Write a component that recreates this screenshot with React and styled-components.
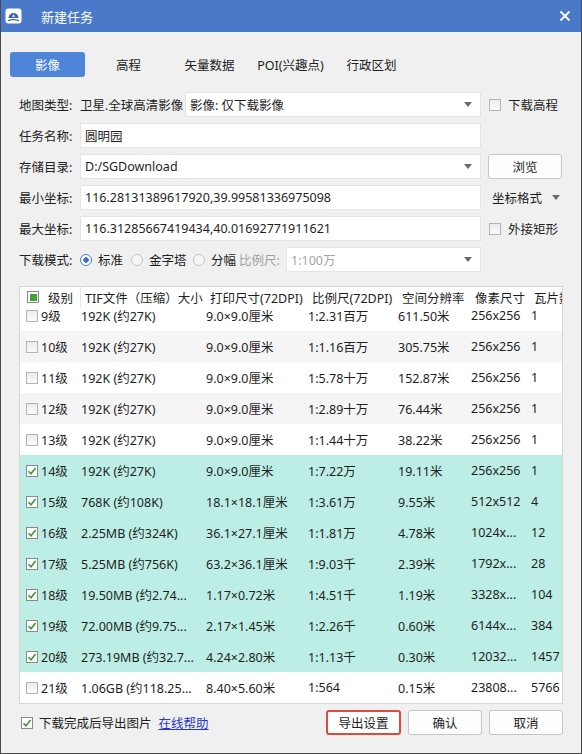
import React from 'react';
import styled, { createGlobalStyle } from 'styled-components';

const GlobalStyle = createGlobalStyle`
    html, body {
        margin: 0;
        padding: 0;
        background: #f0f0f0;
    }
    body {
        font-family: "Noto Sans", "Noto Sans CJK SC", sans-serif;
        font-size: 12.5px;
        color: #1e1e1e;
    }
    * { box-sizing: border-box; }
`

const Window = styled.div`
    width: 582px;
    height: 754px;
    display: flex;
    flex-direction: column;
    background: #f0f0f0;
    border: 1px solid #4a4a4a;
    border-top: none;
`
const TitleBar = styled.div`
    height: 32px;
    flex: none;
    display: flex;
    align-items: center;
    padding: 0 10px 0 4px;
    background: #4a79c9;
    color: #ffffff;
    font-size: 13px;
`
const Title = styled.span`
    margin-left: 19px;
    flex: 1;
`
const Body = styled.div`
    flex: 1;
    display: flex;
    flex-direction: column;
    padding: 20px 18px 0 18px;
`
const Tabs = styled.div`
    display: flex;
    gap: 6px;
    margin-left: -9px;
`
const Tab = styled.div`
    width: 75px;
    height: 25px;
    display: flex;
    align-items: center;
    justify-content: center;
    border-radius: 3px;
    background: ${p => p.$active ? '#4e85d8' : 'transparent'};
    color: ${p => p.$active ? '#ffffff' : '#222'};
`
const Form = styled.div`
    display: flex;
    flex-direction: column;
    gap: 6px;
    margin-top: 15px;
`
const Row = styled.div`
    display: grid;
    grid-template-columns: 54px 401px 1fr;
    column-gap: 7px;
    align-items: center;
    height: 25px;
`
const Label = styled.span`
    color: #222;
    white-space: nowrap;
`
const Field = styled.div`
    height: 25px;
    display: flex;
    align-items: center;
    padding: 0 8px 0 4px;
    background: #ffffff;
    border: 1px solid #e4e4e4;
    color: ${p => p.$disabled ? '#a5a5a5' : '#1e1e1e'};
    flex: 1;
    white-space: nowrap;
`
const FieldText = styled.span`
    flex: 1;
`
const Arrow = styled.span`
    width: 0;
    height: 0;
    border-left: 4px solid transparent;
    border-right: 4px solid transparent;
    border-top: 5px solid #6b6b6b;
    margin-right: ${p => p.$right || 0}px;
`
const Inline = styled.div`
    display: flex;
    align-items: center;
    height: 25px;
`
const Plain = styled.span`
    width: ${p => p.$w}px;
    flex: none;
    white-space: nowrap;
    color: ${p => p.$muted ? '#a0a0a0' : '#1e1e1e'};
`
const CheckLine = styled.label`
    display: flex;
    align-items: center;
    gap: 7px;
    white-space: nowrap;
    padding-left: 1px;
`
const Box = styled.span`
    width: 12px;
    height: 12px;
    flex: none;
    display: inline-flex;
    align-items: center;
    justify-content: center;
    border: 1px solid ${p => p.$checked ? '#8a8a8a' : '#b4b4b4'};
    background: ${p => p.$checked ? '#ffffff' : 'linear-gradient(#ececec, #fafafa)'};
`
const Fill = styled.span`
    width: 7px;
    height: 7px;
    background: #3ba535;
`
const Button = styled.div`
    height: 25px;
    width: ${p => p.$w || 74}px;
    display: flex;
    align-items: center;
    justify-content: center;
    background: #fdfdfd;
    border: ${p => p.$hot ? '2px solid #dc4a40' : '1px solid #c6c6c6'};
    border-radius: 3px;
    color: #1e1e1e;
`
const Formats = styled.div`
    display: flex;
    align-items: center;
    justify-content: space-between;
    padding-left: 4px;
`
const Radio = styled.span`
    width: 12px;
    height: 12px;
    flex: none;
    border-radius: 50%;
    border: 1px solid ${p => p.$on ? '#4a7bd0' : '#c4c4c4'};
    background: ${p => p.$on ? 'radial-gradient(circle, #3f72c8 0 2.5px, #ffffff 3px)' : '#f7f7f7'};
`
const RadioItem = styled.span`
    width: ${p => p.$w}px;
    flex: none;
    display: flex;
    align-items: center;
    gap: 6px;
`

const Table = styled.div`
    margin-top: 14px;
    height: 418px;
    display: flex;
    flex-direction: column;
    background: #ffffff;
    border: 1px solid #d6d6d6;
`
const Grid = styled.div`
    display: grid;
    grid-template-columns: 61px 125px 102px 90px 73px 60px 1fr;
    align-items: center;
    white-space: nowrap;
`
const Head = styled(Grid)`
    height: 20px;
    flex: none;
    position: relative;
    z-index: 1;
    background: #ffffff;
`
const HeadCell = styled.div`
    display: flex;
    align-items: center;
    overflow: hidden;
    padding-left: ${p => p.$pad ?? 4}px;
    gap: 9px;
    height: 20px;
    border-right: ${p => p.$sep ? '1px solid #e6e6e6' : 'none'};
`
const Scroller = styled.div`
    flex: 1;
    overflow: hidden;
`
const Rows = styled.div`
    margin-top: -7px;
`
const DataRow = styled(Grid)`
    height: 31px;
    background: ${p => p.$checked ? '#bdeee5' : p.$odd ? '#f5f5f5' : '#ffffff'};
`
const Cell = styled.div`
    overflow: hidden;
`
const LevelCell = styled.div`
    display: flex;
    align-items: center;
    gap: 3px;
    padding-left: 6px;
`

const Footer = styled.div`
    margin-top: 6px;
    display: flex;
    align-items: center;
    height: 25px;
`
const FooterLeft = styled.div`
    flex: 1;
    display: flex;
    align-items: center;
    gap: 6px;
    padding-left: 2px;
`
const Link = styled.a`
    color: #2536c9;
    text-decoration: underline;
    margin-left: 1px;
`
const Buttons = styled.div`
    display: flex;
    gap: 7px;
`

function Check({ checked, partial }) {
    return (
        <Box $checked={checked || partial}>
            {partial && <Fill />}
            {checked && (
                <svg width="10" height="10" viewBox="0 0 10 10">
                    <path d="M1.5 5.2 L4 7.8 L8.6 2" fill="none" stroke="#3a9a37" strokeWidth="1.6" />
                </svg>
            )}
        </Box>
    )
}

const rows = [
    ['9级', '192K (约27K)', '9.0×9.0厘米', '1:2.31百万', '611.50米', '256x256', '1', false],
    ['10级', '192K (约27K)', '9.0×9.0厘米', '1:1.16百万', '305.75米', '256x256', '1', false],
    ['11级', '192K (约27K)', '9.0×9.0厘米', '1:5.78十万', '152.87米', '256x256', '1', false],
    ['12级', '192K (约27K)', '9.0×9.0厘米', '1:2.89十万', '76.44米', '256x256', '1', false],
    ['13级', '192K (约27K)', '9.0×9.0厘米', '1:1.44十万', '38.22米', '256x256', '1', false],
    ['14级', '192K (约27K)', '9.0×9.0厘米', '1:7.22万', '19.11米', '256x256', '1', true],
    ['15级', '768K (约108K)', '18.1×18.1厘米', '1:3.61万', '9.55米', '512x512', '4', true],
    ['16级', '2.25MB (约324K)', '36.1×27.1厘米', '1:1.81万', '4.78米', '1024x...', '12', true],
    ['17级', '5.25MB (约756K)', '63.2×36.1厘米', '1:9.03千', '2.39米', '1792x...', '28', true],
    ['18级', '19.50MB (约2.74...', '1.17×0.72米', '1:4.51千', '1.19米', '3328x...', '104', true],
    ['19级', '72.00MB (约9.75...', '2.17×1.45米', '1:2.26千', '0.60米', '6144x...', '384', true],
    ['20级', '273.19MB (约32.7...', '4.24×2.80米', '1:1.13千', '0.30米', '12032...', '1457', true],
    ['21级', '1.06GB (约118.25...', '8.40×5.60米', '1:564', '0.15米', '23808...', '5766', false],
]

function App() {
    const tabs = ['影像', '高程', '矢量数据', 'POI(兴趣点)', '行政区划']

    return (
        <>
            <GlobalStyle />
            <Window>
                <TitleBar>
                    <svg width="17" height="16" viewBox="0 0 17 16">
                        <rect x="0.5" y="0.5" width="16" height="15" rx="3" fill="#ffffff" />
                        <path d="M3.5 10 A5 5 0 0 1 13.5 10 Z" fill="#3b64ad" />
                        <path d="M7 8.8 L8.5 6.3 L10 8.8 Z" fill="#ffffff" />
                        <path d="M3 12.6 Q8.5 10.8 14 12.6" fill="none" stroke="#3b64ad" strokeWidth="1.3" />
                    </svg>
                    <Title>新建任务</Title>
                    <svg width="12" height="12" viewBox="0 0 12 12">
                        <path d="M1.5 1.5 L10.5 10.5 M10.5 1.5 L1.5 10.5" stroke="#ffffff" strokeWidth="1.8" />
                    </svg>
                </TitleBar>
                <Body>
                    <Tabs>
                        {tabs.map((t, i) => <Tab key={t} $active={i === 0}>{t}</Tab>)}
                    </Tabs>
                    <Form>
                        <Row>
                            <Label>地图类型:</Label>
                            <Inline>
                                <Plain $w={105}>卫星.全球高清影像</Plain>
                                <Field>
                                    <FieldText>影像: 仅下载影像</FieldText>
                                    <Arrow />
                                </Field>
                            </Inline>
                            <CheckLine><Check />下载高程</CheckLine>
                        </Row>
                        <Row>
                            <Label>任务名称:</Label>
                            <Field><FieldText>圆明园</FieldText></Field>
                        </Row>
                        <Row>
                            <Label>存储目录:</Label>
                            <Field>
                                <FieldText>D:/SGDownload</FieldText>
                                <Arrow />
                            </Field>
                            <Button>浏览</Button>
                        </Row>
                        <Row>
                            <Label>最小坐标:</Label>
                            <Field><FieldText>116.28131389617920,39.99581336975098</FieldText></Field>
                            <Formats>坐标格式<Arrow $right={3} /></Formats>
                        </Row>
                        <Row>
                            <Label>最大坐标:</Label>
                            <Field><FieldText>116.31285667419434,40.01692771911621</FieldText></Field>
                            <CheckLine><Check />外接矩形</CheckLine>
                        </Row>
                        <Row>
                            <Label>下载模式:</Label>
                            <Inline>
                                <RadioItem $w={51}><Radio $on />标准</RadioItem>
                                <RadioItem $w={62}><Radio />金字塔</RadioItem>
                                <RadioItem $w={46}><Radio />分幅</RadioItem>
                                <Plain $w={47} $muted>比例尺:</Plain>
                                <Field $disabled>
                                    <FieldText>1:100万</FieldText>
                                    <Arrow />
                                </Field>
                            </Inline>
                        </Row>
                    </Form>

                    <Table>
                        <Head>
                            <HeadCell $pad={7} $sep><Check partial />级别</HeadCell>
                            <HeadCell>TIF文件（压缩）大小</HeadCell>
                            <HeadCell>打印尺寸(72DPI)</HeadCell>
                            <HeadCell>比例尺(72DPI)</HeadCell>
                            <HeadCell>空间分辨率</HeadCell>
                            <HeadCell>像素尺寸</HeadCell>
                            <HeadCell $pad={3}>瓦片数</HeadCell>
                        </Head>
                        <Scroller>
                            <Rows>
                                {rows.map((r, i) => (
                                    <DataRow key={r[0]} $checked={r[7]} $odd={i % 2 === 1}>
                                        <LevelCell><Check checked={r[7]} />{r[0]}</LevelCell>
                                        {r.slice(1, 7).map((v, j) => <Cell key={j}>{v}</Cell>)}
                                    </DataRow>
                                ))}
                            </Rows>
                        </Scroller>
                    </Table>

                    <Footer>
                        <FooterLeft>
                            <Check checked />
                            <span>下载完成后导出图片</span>
                            <Link>在线帮助</Link>
                        </FooterLeft>
                        <Buttons>
                            <Button $hot $w={75}>导出设置</Button>
                            <Button>确认</Button>
                            <Button>取消</Button>
                        </Buttons>
                    </Footer>
                </Body>
            </Window>
        </>
    )
}

export default App;
